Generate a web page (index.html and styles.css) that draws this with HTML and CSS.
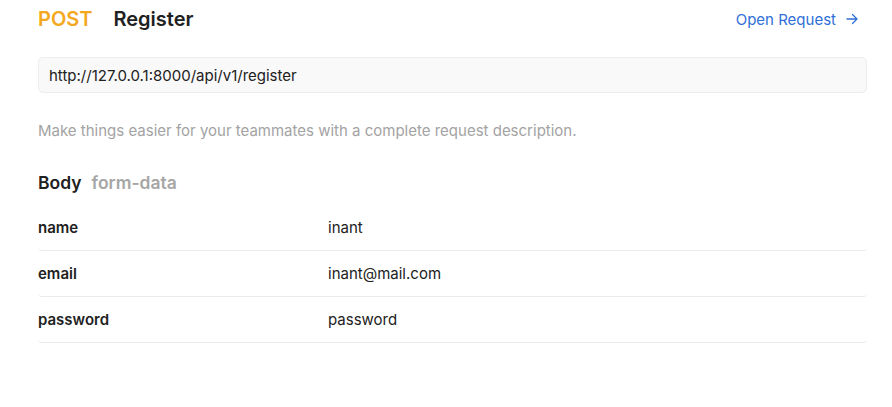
FILE: index.html
```html
<!DOCTYPE html>
<html>
<head>
<meta charset="utf-8">
<link rel="stylesheet" href="styles.css">
</head>
<body>
<div class="page">
  <div class="header">
    <div class="title">
      <span class="method">POST</span>
      <span class="name">Register</span>
    </div>
    <a class="open">Open Request
      <svg class="arrow" width="12" height="12" viewBox="0 0 12 12"><path d="M1 6h10M6.5 1.5L11 6l-4.5 4.5" fill="none" stroke="currentColor" stroke-width="1.3" stroke-linecap="round" stroke-linejoin="round"/></svg>
    </a>
  </div>
  <div class="url">http://127.0.0.1:8000/api/v1/register</div>
  <p class="desc">Make things easier for your teammates with a complete request description.</p>
  <div class="body-title"><span class="bt">Body</span><span class="bk">form-data</span></div>
  <div class="rows">
    <div class="row"><div class="key">name</div><div class="val">inant</div></div>
    <div class="row"><div class="key">email</div><div class="val">inant@mail.com</div></div>
    <div class="row"><div class="key">password</div><div class="val">password</div></div>
  </div>
</div>
</body>
</html>
```
FILE: styles.css
```css
html, body { margin: 0; padding: 0; background: #fff; }
body { font-family: Inter, "Noto Sans", sans-serif; color: #212121; }
.page { padding: 0 25px 0 38px; }
.header { display: flex; justify-content: space-between; align-items: center; height: 38px; }
.title { display: flex; align-items: center; gap: 21px; font-size: 20px; font-weight: 600; }
.method { color: #f4a81d; font-weight: 600; }
.name { color: #212121; }
.open { display: flex; align-items: center; gap: 10px; color: #2f6fd6; font-size: 15px; margin-right: 9px; }
.arrow { display: block; }
.url { margin-top: 19px; height: 34px; border: 1px solid #ededed; border-radius: 5px; background: #f9f9f9; box-sizing: content-box; display: flex; align-items: center; padding: 0 10px; font-size: 15px; color: #212121; }
.desc { margin: 28px 0 0; font-size: 15px; color: #a3a3a3; line-height: 20px; }
.body-title { margin-top: 30px; font-size: 17.5px; font-weight: 600; display: flex; gap: 10px; line-height: 24px; }
.bk { color: #a6a6a6; }
.rows { margin-top: 10px; }
.row { display: flex; align-items: center; height: 45px; border-bottom: 1px solid #ebebeb; border-radius: 0 0 4px 4px; font-size: 15px; }
.key { width: 290px; font-weight: 600; }
.val { color: #212121; }
```
